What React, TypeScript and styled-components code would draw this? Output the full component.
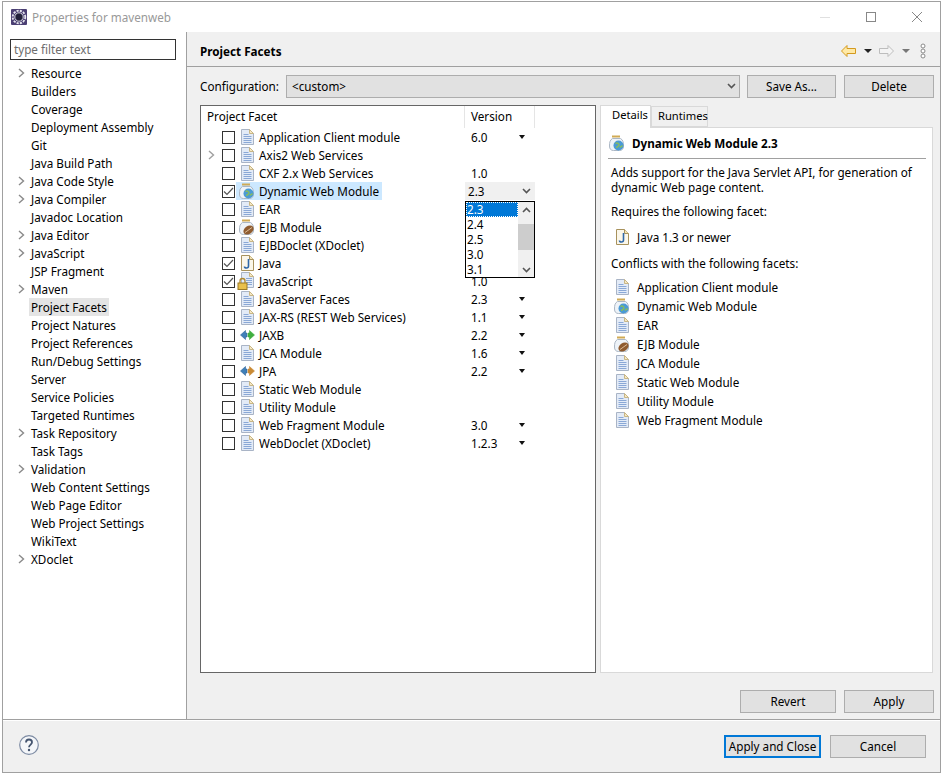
import React from 'react'
import styled, { createGlobalStyle } from 'styled-components'

const GlobalStyle = createGlobalStyle`
    html, body {
        margin: 0;
        padding: 0;
        background: #fff;
    }
    body {
        font-family: "Noto Sans", "Liberation Sans", sans-serif;
        font-size: 11.7px;
        color: #000;
    }
    * { box-sizing: border-box; }
`

const Page = styled.div`
    width: 944px;
    height: 775px;
    padding: 1px 3px 2px 2px;
`

const Window = styled.div`
    height: 100%;
    display: flex;
    flex-direction: column;
    border: 1px solid #a0a0a0;
    background: #f0f0f0;
`

const TitleBar = styled.div`
    height: 30px;
    flex: none;
    display: flex;
    align-items: center;
    padding: 0 0 0 8px;
    background: #fff;
`

const TitleText = styled.span`
    margin-left: 5px;
    color: #999;
    flex: 1;
    line-height: 30px;
`

const WinButton = styled.span`
    display: flex;
    width: 46px;
    justify-content: center;
    align-items: center;
`

const Main = styled.div`
    flex: 1;
    display: flex;
    min-height: 0;
`

const Sidebar = styled.aside`
    width: 184px;
    flex: none;
    background: #fff;
    border-right: 1px solid #a0a0a0;
    padding: 7px 0 0 7px;
`

const FilterBox = styled.div`
    width: 166px;
    height: 21px;
    border: 1px solid #333;
    padding-left: 3px;
    line-height: 18px;
    color: #6d6d6d;
    background: #fff;
`

const Tree = styled.ul`
    list-style: none;
    margin: 4px 0 0;
    padding: 0;
`

const TreeItem = styled.li`
    height: 18px;
    display: flex;
    align-items: center;
`

const TreeArrow = styled.span`
    width: 19px;
    padding-left: 8px;
    display: flex;
    align-items: center;
    flex: none;
`

const TreeLabel = styled.span<{ $selected?: boolean }>`
    padding: 0 2px;
    height: 18px;
    line-height: 18px;
    white-space: nowrap;
    background: ${(p) => (p.$selected ? '#e4e4e4' : 'transparent')};
`

const Content = styled.section`
    flex: 1;
    min-width: 0;
    display: flex;
    flex-direction: column;
`

const ContentHeader = styled.div`
    height: 35px;
    flex: none;
    padding: 3px 14px 0 13px;
    display: flex;
    align-items: center;
    justify-content: space-between;
    border-bottom: 1px solid #a0a0a0;
`

const HeaderTitle = styled.h1`
    margin: 0;
    font-size: 11.7px;
    font-weight: 700;
`

const HeaderTools = styled.div`
    display: flex;
    align-items: center;
`

const ContentBody = styled.div`
    flex: 1;
    min-height: 0;
    padding: 8px 6px 6px 13px;
    display: flex;
    flex-direction: column;
`

const ConfigRow = styled.div`
    display: flex;
    align-items: center;
    height: 23px;
    flex: none;
`

const ConfigLabel = styled.span`
    width: 86px;
    flex: none;
    padding-bottom: 2px;
`

const ConfigSelect = styled.div`
    width: 454px;
    height: 23px;
    flex: none;
    display: flex;
    align-items: center;
    justify-content: space-between;
    padding: 0 3px 2px 5px;
    background: #e1e1e1;
    border: 1px solid #adadad;
`

const Button = styled.button<{ $width: number; $default?: boolean }>`
    width: ${(p) => p.$width}px;
    height: 23px;
    padding: 0 0 2px;
    flex: none;
    font: inherit;
    color: #000;
    background: #e1e1e1;
    border: ${(p) => (p.$default ? '2px solid #0078d7' : '1px solid #adadad')};
`

const ConfigButtons = styled.div`
    display: flex;
    gap: 8px;
    margin-left: 7px;
`

const Panes = styled.div`
    flex: 1;
    min-height: 0;
    display: flex;
    gap: 4px;
    margin-top: 7px;
    padding-right: 1px;
`

const FacetTable = styled.div`
    position: relative;
    width: 396px;
    flex: none;
    background: #fff;
    border: 1px solid #666;
`

const TableHead = styled.div`
    height: 22px;
    display: flex;
`

const HeadCell = styled.div<{ $width: number; $pad: number }>`
    width: ${(p) => p.$width}px;
    padding-left: ${(p) => p.$pad}px;
    line-height: 20px;
    border-right: 1px solid #e5e5e5;
`

const FacetRow = styled.div`
    height: 18px;
    display: flex;
    align-items: center;
`

const FacetName = styled.div`
    width: 264px;
    flex: none;
    display: flex;
    align-items: center;
`

const Twist = styled.span`
    width: 21px;
    flex: none;
    padding-left: 7px;
    display: flex;
    align-items: center;
`

const CheckBox = styled.span`
    width: 13px;
    height: 13px;
    flex: none;
    display: flex;
    align-items: center;
    justify-content: center;
    background: #fff;
    border: 1px solid #333;
`

const FacetLabel = styled.span<{ $selected?: boolean }>`
    margin-left: 1px;
    height: 18px;
    padding: 0 3px 0 3px;
    display: flex;
    align-items: center;
    gap: 4px;
    white-space: nowrap;
    background: ${(p) => (p.$selected ? '#cce8ff' : 'transparent')};
`

const IconSlot = styled.span`
    width: 16px;
    height: 16px;
    flex: none;
    display: flex;
    align-items: center;
    justify-content: center;
`

const VersionCell = styled.div<{ $active?: boolean }>`
    width: 70px;
    height: 18px;
    flex: none;
    display: flex;
    align-items: center;
    justify-content: space-between;
    padding: ${(p) => (p.$active ? '0 4px 0 3px' : '0 10px 0 6px')};
    background: ${(p) => (p.$active ? '#f0f0f0' : 'transparent')};
`

const Caret = styled.span`
    width: 0;
    height: 0;
    border-left: 3.5px solid transparent;
    border-right: 3.5px solid transparent;
    border-top: 4px solid #111;
`

const Dropdown = styled.div`
    position: absolute;
    left: 264px;
    top: 95px;
    width: 70px;
    height: 77px;
    display: flex;
    background: #fff;
    border: 1px solid #000;
    overflow: hidden;
`

const DropList = styled.div`
    flex: 1;
`

const DropItem = styled.div<{ $selected?: boolean }>`
    height: 15px;
    line-height: 15px;
    padding-left: 1px;
    color: ${(p) => (p.$selected ? '#fff' : '#000')};
    background: ${(p) => (p.$selected ? '#0078d7' : 'transparent')};
    outline: ${(p) => (p.$selected ? '1px dotted #fff' : 'none')};
    outline-offset: -1px;
`

const ScrollBar = styled.div`
    width: 16px;
    flex: none;
    display: flex;
    flex-direction: column;
    justify-content: space-between;
    background: #f0f0f0;
    position: relative;
`

const ScrollButton = styled.span`
    height: 15px;
    display: flex;
    align-items: center;
    justify-content: center;
`

const ScrollThumb = styled.span`
    position: absolute;
    left: 0;
    right: 0;
    top: 22px;
    height: 26px;
    background: #cdcdcd;
`

const DetailPane = styled.div`
    flex: 1;
    min-width: 0;
    display: flex;
    flex-direction: column;
    margin-top: -1px;
`

const Tabs = styled.div`
    height: 23px;
    flex: none;
    display: flex;
    align-items: flex-end;
    position: relative;
    z-index: 1;
    font-size: 11.2px;
`

const Tab = styled.div<{ $active?: boolean }>`
    height: ${(p) => (p.$active ? 23 : 21)}px;
    width: ${(p) => (p.$active ? 51 : 57)}px;
    padding-left: ${(p) => (p.$active ? 11 : 6)}px;
    line-height: ${(p) => (p.$active ? 17 : 18)}px;
    background: ${(p) => (p.$active ? '#fff' : '#f0f0f0')};
    border: 1px solid #d9d9d9;
    border-bottom: ${(p) => (p.$active ? 'none' : '1px solid #d9d9d9')};
    margin-bottom: ${(p) => (p.$active ? -1 : 0)}px;
`

const DetailBody = styled.div`
    flex: 1;
    min-height: 0;
    background: #fff;
    border: 1px solid #d9d9d9;
    padding: 7px 6px 0 7px;
`

const DetailHeading = styled.div`
    height: 24px;
    display: flex;
    align-items: center;
    gap: 7px;
    padding: 0 0 7px 1px;
    font-weight: 700;
    border-bottom: 1px solid #a0a0a0;
`

const Paragraph = styled.p<{ $top: number }>`
    margin: ${(p) => p.$top}px 0 0 3px;
    line-height: 15px;
`

const DetailList = styled.ul<{ $top: number }>`
    list-style: none;
    margin: ${(p) => p.$top}px 0 0;
    padding: 0 0 0 6px;
`

const DetailItem = styled.li`
    height: 19px;
    display: flex;
    align-items: center;
    gap: 7px;
`

const ActionRow = styled.div`
    flex: none;
    display: flex;
    justify-content: flex-end;
    gap: 8px;
    margin-top: 17px;
`

const Footer = styled.footer`
    height: 53px;
    flex: none;
    border-top: 1px solid #a0a0a0;
    box-shadow: inset 0 1px 0 #fff;
    padding: 15px 14px 0 16px;
    display: flex;
    align-items: flex-start;
    justify-content: space-between;
`

const FooterButtons = styled.div`
    display: flex;
    gap: 9px;
`

const ToolCaret = styled.span<{ $color: string; $mr: number }>`
    width: 0;
    height: 0;
    margin: 0 ${(p) => p.$mr}px 0 8px;
    border-left: 4px solid transparent;
    border-right: 4px solid transparent;
    border-top: 4px solid ${(p) => p.$color};
`

const Chevron = ({ color = '#8a8a8a' }: { color?: string }) => (
    <svg width="7" height="10" viewBox="0 0 7 10">
        <path d="M1 1l4.5 4L1 9" fill="none" stroke={color} strokeWidth="1.4" />
    </svg>
)

const SmallChevron = ({ up }: { up?: boolean }) => (
    <svg width="9" height="6" viewBox="0 0 9 6">
        <path d={up ? 'M1 5l3.5-3.5L8 5' : 'M1 1l3.5 3.5L8 1'} fill="none" stroke="#555" strokeWidth="1.6" />
    </svg>
)

const Check = () => (
    <svg width="11" height="11" viewBox="0 0 11 11">
        <path d="M1 5.5l3 3L10 2" fill="none" stroke="#555" strokeWidth="1.2" />
    </svg>
)

const PageIcon = () => (
    <svg width="13" height="16" viewBox="0 0 13 16">
        <path d="M.5.5h8l4 4v11H.5z" fill="#e3ebf7" stroke="#a9b4c6" />
        <path d="M8.500.5v4h4z" fill="#f6e9c4" stroke="#c9b685" />
        <path d="M2.500 5.500h5M2.500 7.500h8M2.500 9.500h8M2.500 11.500h8M2.500 13.500h8" stroke="#8aa8d6" />
    </svg>
)

const Jar = ({ bean }: { bean?: boolean }) => (
    <svg width="16" height="16" viewBox="0 0 16 16">
        <path d="M3 1.500h8" stroke="#d0aa55" strokeWidth="2" />
        <path d="M3.500 3.500C1 5 .5 7 .5 11c0 3 1.500 4.500 4 4.500h6c2.500 0 4-1.500 4-4.500 0-4-.5-6-3-7.500z" fill="#eef3f8" stroke="#aab6c4" />
        {bean ? (
            <>
                <ellipse cx="9.500" cy="11" rx="5.500" ry="4" fill="#8f5c30" transform="rotate(-35 9.500 11)" />
                <path d="M6 13.500l7-5" stroke="#dcbc98" />
            </>
        ) : (
            <>
                <circle cx="9.500" cy="10.500" r="5" fill="#4a9ad6" />
                <path d="M6.500 8.500c2-1 3.500 0 3.500 1.500s-2 1-2.500 3M11 12.500c.5-1 2-1 2.500-2" stroke="#86bd5e" strokeWidth="1.500" fill="none" />
            </>
        )}
    </svg>
)

const JavaFile = () => (
    <svg width="13" height="16" viewBox="0 0 13 16">
        <path d="M.5.5h8l4 4v11H.5z" fill="#fbf7ea" stroke="#a8925c" />
        <path d="M8.500.5v4h4" fill="#f2e4b8" stroke="#a8925c" />
        <path d="M7.500 4v7c0 1.500-1 2-2 2s-2-.5-2-1.500" fill="none" stroke="#2f68a8" strokeWidth="1.600" />
    </svg>
)

const LockedPage = () => (
    <svg width="18" height="18" viewBox="0 0 18 18" style={{ marginLeft: -2 }}>
        <path d="M4.500.5h8l4 4v11h-12z" fill="#e3ebf7" stroke="#a9b4c6" />
        <path d="M12.500.5v4h4z" fill="#f6e9c4" stroke="#c9b685" />
        <path d="M9 6.500h6M9 8.500h6M9 10.500h6M9 12.500h6" stroke="#8aa8d6" />
        <path d="M3 11V9a2.500 2.500 0 015 0v2" fill="none" stroke="#b08a30" strokeWidth="1.300" />
        <rect x="1" y="11" width="9" height="6.500" fill="#e9c04c" stroke="#9c7a24" />
    </svg>
)

const BiArrow = ({ right }: { right: string }) => (
    <svg width="15" height="10" viewBox="0 0 15 10">
        <path d="M5.500.5L.5 5l5 4.500V7H7V3H5.500z" fill="#3f7fb8" stroke="#2d6397" strokeWidth=".6" />
        <path d="M9.500.5l5 4.500-5 4.500V7H8V3h1.500z" fill={right} strokeWidth=".6" stroke={right} />
    </svg>
)

const EclipseLogo = () => (
    <svg width="16" height="16" viewBox="0 0 16 16">
        <rect width="16" height="16" rx="1" fill="#4b3f73" />
        <circle cx="8" cy="8" r="6.300" fill="none" stroke="#e6e6ee" strokeWidth="1.800" strokeDasharray="2.200 1.100" />
        <circle cx="8" cy="8" r="4.200" fill="#22203a" stroke="#d8d8e2" />
    </svg>
)

const BackArrow = ({ disabled }: { disabled?: boolean }) => (
    <svg width="15" height="12" viewBox="0 0 15 12">
        {disabled ? (
            <path d="M9 .5L14.500 6 9 11.500V8.500H.5v-5H9z" fill="#f4f4f4" stroke="#bdbdbd" />
        ) : (
            <path d="M6 .5L.5 6 6 11.500V8.500h8.500v-5H6z" fill="#ffe9a6" stroke="#d49a1e" />
        )}
    </svg>
)

const treeItems: [string, boolean?][] = [
    ['Resource', true], ['Builders'], ['Coverage'], ['Deployment Assembly'], ['Git'], ['Java Build Path'],
    ['Java Code Style', true], ['Java Compiler', true], ['Javadoc Location'], ['Java Editor', true],
    ['JavaScript', true], ['JSP Fragment'], ['Maven', true], ['Project Facets'], ['Project Natures'],
    ['Project References'], ['Run/Debug Settings'], ['Server'], ['Service Policies'], ['Targeted Runtimes'],
    ['Task Repository', true], ['Task Tags'], ['Validation', true], ['Web Content Settings'], ['Web Page Editor'],
    ['Web Project Settings'], ['WikiText'], ['XDoclet', true],
]

type Facet = {
    name: string
    icon: 'page' | 'jar' | 'bean' | 'java' | 'lock' | 'jaxb' | 'jpa'
    version?: string
    caret?: boolean
    checked?: boolean
    twist?: boolean
    active?: boolean
}

const facets: Facet[] = [
    { name: 'Application Client module', icon: 'page', version: '6.0', caret: true },
    { name: 'Axis2 Web Services', icon: 'page', twist: true },
    { name: 'CXF 2.x Web Services', icon: 'page', version: '1.0' },
    { name: 'Dynamic Web Module', icon: 'jar', version: '2.3', checked: true, active: true },
    { name: 'EAR', icon: 'page' },
    { name: 'EJB Module', icon: 'bean' },
    { name: 'EJBDoclet (XDoclet)', icon: 'page' },
    { name: 'Java', icon: 'java', checked: true },
    { name: 'JavaScript', icon: 'lock', version: '1.0', checked: true },
    { name: 'JavaServer Faces', icon: 'page', version: '2.3', caret: true },
    { name: 'JAX-RS (REST Web Services)', icon: 'page', version: '1.1', caret: true },
    { name: 'JAXB', icon: 'jaxb', version: '2.2', caret: true },
    { name: 'JCA Module', icon: 'page', version: '1.6', caret: true },
    { name: 'JPA', icon: 'jpa', version: '2.2', caret: true },
    { name: 'Static Web Module', icon: 'page' },
    { name: 'Utility Module', icon: 'page' },
    { name: 'Web Fragment Module', icon: 'page', version: '3.0', caret: true },
    { name: 'WebDoclet (XDoclet)', icon: 'page', version: '1.2.3', caret: true },
]

const conflicts: [string, Facet['icon']][] = [
    ['Application Client module', 'page'], ['Dynamic Web Module', 'jar'], ['EAR', 'page'], ['EJB Module', 'bean'],
    ['JCA Module', 'page'], ['Static Web Module', 'page'], ['Utility Module', 'page'], ['Web Fragment Module', 'page'],
]

const FacetIcon = ({ icon }: { icon: Facet['icon'] }) => {
    switch (icon) {
        case 'jar': return <Jar />
        case 'bean': return <Jar bean />
        case 'java': return <JavaFile />
        case 'lock': return <LockedPage />
        case 'jaxb': return <BiArrow right="#3fae3f" />
        case 'jpa': return <BiArrow right="#c98a35" />
        default: return <PageIcon />
    }
}

export default function App() {
    return (
        <Page>
            <GlobalStyle />
            <Window>
                <TitleBar>
                    <EclipseLogo />
                    <TitleText>Properties for mavenweb</TitleText>
                    <WinButton>
                        <svg width="10" height="10" viewBox="0 0 10 10"><path d="M0 5.500h10" stroke="#e0e0e0" /></svg>
                    </WinButton>
                    <WinButton>
                        <svg width="10" height="10" viewBox="0 0 10 10"><rect x=".5" y=".5" width="9" height="9" fill="none" stroke="#888" /></svg>
                    </WinButton>
                    <WinButton>
                        <svg width="10" height="10" viewBox="0 0 10 10"><path d="M0 0l10 10M10 0L0 10" stroke="#888" /></svg>
                    </WinButton>
                </TitleBar>
                <Main>
                    <Sidebar>
                        <FilterBox>type filter text</FilterBox>
                        <Tree>
                            {treeItems.map(([label, expandable]) => (
                                <TreeItem key={label}>
                                    <TreeArrow>{expandable && <Chevron />}</TreeArrow>
                                    <TreeLabel $selected={label === 'Project Facets'}>{label}</TreeLabel>
                                </TreeItem>
                            ))}
                        </Tree>
                    </Sidebar>
                    <Content>
                        <ContentHeader>
                            <HeaderTitle>Project Facets</HeaderTitle>
                            <HeaderTools>
                                <BackArrow />
                                <ToolCaret $color="#222" $mr={7} />
                                <BackArrow disabled />
                                <ToolCaret $color="#777" $mr={10} />
                                <svg width="6" height="16" viewBox="0 0 6 16">
                                    <circle cx="3" cy="3" r="2" fill="#fff" stroke="#8a8a8a" />
                                    <circle cx="3" cy="8" r="2" fill="#fff" stroke="#8a8a8a" />
                                    <circle cx="3" cy="13" r="2" fill="#fff" stroke="#8a8a8a" />
                                </svg>
                            </HeaderTools>
                        </ContentHeader>
                        <ContentBody>
                            <ConfigRow>
                                <ConfigLabel>Configuration:</ConfigLabel>
                                <ConfigSelect>
                                    &lt;custom&gt;
                                    <SmallChevron />
                                </ConfigSelect>
                                <ConfigButtons>
                                    <Button $width={89}>Save As...</Button>
                                    <Button $width={90}>Delete</Button>
                                </ConfigButtons>
                            </ConfigRow>
                            <Panes>
                                <FacetTable>
                                    <TableHead>
                                        <HeadCell $width={264} $pad={6}>Project Facet</HeadCell>
                                        <HeadCell $width={70} $pad={6}>Version</HeadCell>
                                    </TableHead>
                                    {facets.map((f) => (
                                        <FacetRow key={f.name}>
                                            <FacetName>
                                                <Twist>{f.twist && <Chevron color="#a0a0a0" />}</Twist>
                                                <CheckBox>{f.checked && <Check />}</CheckBox>
                                                <FacetLabel $selected={f.active}>
                                                    <IconSlot><FacetIcon icon={f.icon} /></IconSlot>
                                                    {f.name}
                                                </FacetLabel>
                                            </FacetName>
                                            <VersionCell $active={f.active}>
                                                <span>{f.version}</span>
                                                {f.caret && <Caret />}
                                                {f.active && <SmallChevron />}
                                            </VersionCell>
                                        </FacetRow>
                                    ))}
                                    <Dropdown>
                                        <DropList>
                                            <DropItem $selected>2.3</DropItem>
                                            <DropItem>2.4</DropItem>
                                            <DropItem>2.5</DropItem>
                                            <DropItem>3.0</DropItem>
                                            <DropItem>3.1</DropItem>
                                        </DropList>
                                        <ScrollBar>
                                            <ScrollButton><SmallChevron up /></ScrollButton>
                                            <ScrollThumb />
                                            <ScrollButton><SmallChevron /></ScrollButton>
                                        </ScrollBar>
                                    </Dropdown>
                                </FacetTable>
                                <DetailPane>
                                    <Tabs>
                                        <Tab $active>Details</Tab>
                                        <Tab>Runtimes</Tab>
                                    </Tabs>
                                    <DetailBody>
                                        <DetailHeading>
                                            <Jar />
                                            Dynamic Web Module 2.3
                                        </DetailHeading>
                                        <Paragraph $top={6}>
                                            Adds support for the Java Servlet API, for generation of<br />
                                            dynamic Web page content.
                                        </Paragraph>
                                        <Paragraph $top={9}>Requires the following facet:</Paragraph>
                                        <DetailList $top={8}>
                                            <DetailItem>
                                                <IconSlot><JavaFile /></IconSlot>
                                                Java 1.3 or newer
                                            </DetailItem>
                                        </DetailList>
                                        <Paragraph $top={10}>Conflicts with the following facets:</Paragraph>
                                        <DetailList $top={6}>
                                            {conflicts.map(([name, icon]) => (
                                                <DetailItem key={name}>
                                                    <IconSlot><FacetIcon icon={icon} /></IconSlot>
                                                    {name}
                                                </DetailItem>
                                            ))}
                                        </DetailList>
                                    </DetailBody>
                                </DetailPane>
                            </Panes>
                            <ActionRow>
                                <Button $width={96}>Revert</Button>
                                <Button $width={90}>Apply</Button>
                            </ActionRow>
                        </ContentBody>
                    </Content>
                </Main>
                <Footer>
                    <svg width="20" height="20" viewBox="0 0 20 20">
                        <circle cx="10" cy="10" r="9.300" fill="#f4f6f9" stroke="#7d8ba3" strokeWidth="1.200" />
                        <path d="M7 7.500C7 5.500 8.500 4.500 10 4.500s3 1 3 2.800c0 2.200-3 2.400-3 5" fill="none" stroke="#44546f" strokeWidth="1.800" />
                        <circle cx="10" cy="15" r="1.200" fill="#44546f" />
                    </svg>
                    <FooterButtons>
                        <Button $width={97} $default>Apply and Close</Button>
                        <Button $width={96}>Cancel</Button>
                    </FooterButtons>
                </Footer>
            </Window>
        </Page>
    )
}
